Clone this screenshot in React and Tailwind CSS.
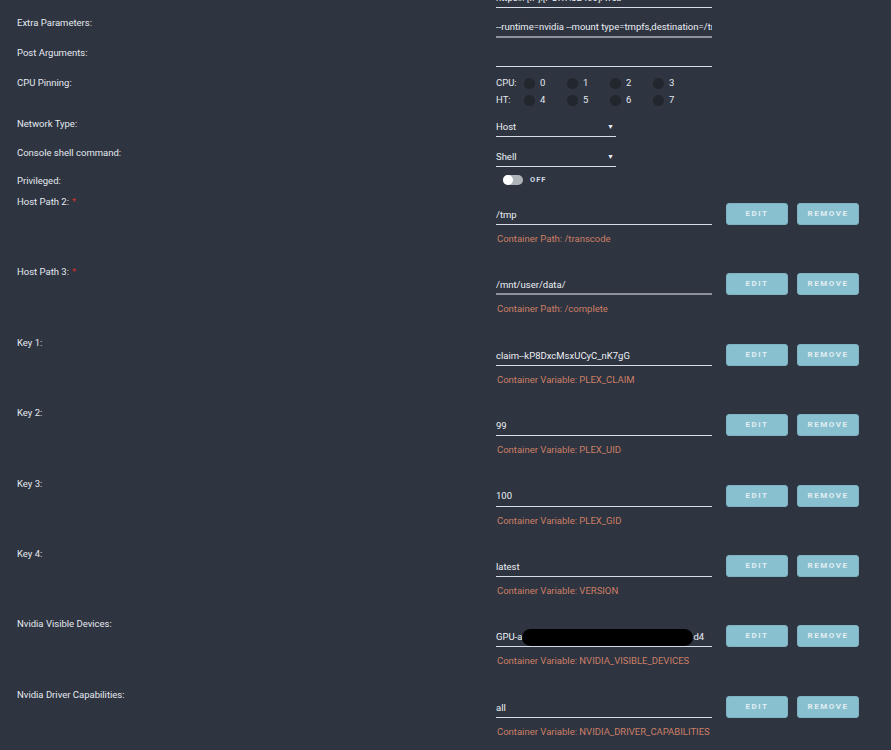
import React from "react";

// ═══════════════════ Docker template form (bottom part) ═══════════════════

const font = { fontFamily: "Roboto, 'Liberation Sans', sans-serif" };

function Label({ children, required }) {
  return (
    <div className="w-[479px] shrink-0 pt-[1px] text-[9.5px] leading-[14px] text-[#e5e9f0]">
      {children}
      {required && <span className="ml-[3px] text-[#d0312d]">*</span>}
    </div>
  );
}

function Underline({ children, gray, width = "w-[216px]" }) {
  return (
    <div
      className={`${width} h-[21px] pt-[2px] flex items-center overflow-hidden whitespace-nowrap text-[9.5px] text-[#eceff4] ${
        gray ? "border-b-2 border-[#8d929b]" : "border-b border-[#d8dee9]"
      }`}
    >
      {children}
    </div>
  );
}

function SimpleRow({ label, value, gray, pt, mt }) {
  return (
    <div className="flex">
      <div className={pt}>
        <Label>{label}</Label>
      </div>
      <div className={mt}>
        <Underline gray={gray}>
          <span>{value}</span>
        </Underline>
      </div>
    </div>
  );
}

function SelectRow({ label, value, pt, mt }) {
  return (
    <div className="flex">
      <div className={pt}>
        <Label>{label}</Label>
      </div>
      <div className={mt}>
        <div className="w-[120px] h-[20px] pt-[2px] flex items-center justify-between border-b border-[#d8dee9] text-[9.5px] text-[#eceff4]">
          <span>{value}</span>
          <span className="text-[7px] pr-[2px]">▼</span>
        </div>
      </div>
    </div>
  );
}

function Btn({ children, w }) {
  return (
    <button
      className={`${w} h-[22px] rounded-[3px] bg-[#88c0d0] border border-[#7fb2c2] text-[8px] font-bold tracking-[1.5px] text-[#e3eef2] flex items-center justify-center`}
    >
      {children}
    </button>
  );
}

function ConfigRow({ label, value, desc, required, gray }) {
  return (
    <div className="flex h-[70.4px]">
      <Label required={required}>{label}</Label>
      <div className="flex flex-col">
        <div className="flex items-start">
          <div className="mt-[10px]">
            <Underline gray={gray}>{value}</Underline>
          </div>
          <div className="flex gap-[9px] ml-[14px] mt-[9px]">
            <Btn w="w-[62px]">EDIT</Btn>
            <Btn w="w-[62px]">REMOVE</Btn>
          </div>
        </div>
        <div className="mt-[7px] text-[9.5px] leading-[14px] text-[#cc7f66] pl-[1px]">{desc}</div>
      </div>
    </div>
  );
}

function CpuLine({ label, nums }) {
  return (
    <div className="flex items-center h-[17px] text-[9.5px] text-[#e5e9f0]">
      <span className="w-[28px]">{label}</span>
      {nums.map((n) => (
        <div key={n} className="w-[43px] flex items-center">
          <span className="w-[11px] h-[11px] rounded-full bg-[#22262d]" />
          <span className="ml-[5px]">{n}</span>
        </div>
      ))}
    </div>
  );
}

const rows = [
  { label: "Host Path 2:", value: "/tmp", desc: "Container Path: /transcode", required: true },
  { label: "Host Path 3:", value: "/mnt/user/data/", desc: "Container Path: /complete", required: true, gray: true },
  { label: "Key 1:", value: "claim--kP8DxcMsxUCyC_nK7gG", desc: "Container Variable: PLEX_CLAIM" },
  { label: "Key 2:", value: "99", desc: "Container Variable: PLEX_UID" },
  { label: "Key 3:", value: "100", desc: "Container Variable: PLEX_GID" },
  { label: "Key 4:", value: "latest", desc: "Container Variable: VERSION" },
  {
    label: "Nvidia Visible Devices:",
    value: (
      <span className="flex items-center">
        GPU-a
        <span className="inline-block w-[171px] h-[17px] rounded-full bg-black" />
        d4
      </span>
    ),
    desc: "Container Variable: NVIDIA_VISIBLE_DEVICES",
  },
  { label: "Nvidia Driver Capabilities:", value: "all", desc: "Container Variable: NVIDIA_DRIVER_CAPABILITIES" },
];

export default function App() {
  return (
    <div className="w-[891px] h-[750px] overflow-hidden bg-[#2e3440] pl-[17px]" style={font}>
      {/* first row, scrolled mostly out of view */}
      <div className="flex -mt-[13px]">
        <div className="w-[479px]" />
        <Underline>
          <span>https://[IP]:[PORT:32400]/web</span>
        </Underline>
      </div>

      <SimpleRow
        label="Extra Parameters:"
        value="--runtime=nvidia --mount type=tmpfs,destination=/transcode,tmpfs-size=4000000000"
        gray
        pt="pt-[7px]"
        mt="mt-[9px]"
      />
      <SimpleRow label="Post Arguments:" value="" pt="pt-[7px]" mt="mt-[8px]" />

      <div className="flex h-[42px]">
        <div className="pt-[8px]">
          <Label>CPU Pinning:</Label>
        </div>
        <div className="pt-[8px]">
          <CpuLine label="CPU:" nums={[0, 1, 2, 3]} />
          <CpuLine label="HT:" nums={[4, 5, 6, 7]} />
        </div>
      </div>

      <SelectRow label="Network Type:" value="Host" pt="pt-[7px]" mt="mt-[8px]" />
      <SelectRow label="Console shell command:" value="Shell" pt="pt-[8px]" mt="mt-[10px]" />

      <div className="flex h-[27px]">
        <div className="pt-[6px]">
          <Label>Privileged:</Label>
        </div>
        <div className="pt-[8px] pl-[7px] flex items-start gap-[7px]">
          <div className="w-[20px] h-[10px] rounded-full bg-[#aeb3b9] flex items-center">
            <span className="w-[10px] h-[10px] rounded-full bg-white" />
          </div>
          <span className="text-[7.5px] leading-[10px] font-bold tracking-[1px] text-[#d8dee9]">OFF</span>
        </div>
      </div>

      {rows.map((r) => (
        <ConfigRow key={r.label} {...r} />
      ))}
    </div>
  );
}
